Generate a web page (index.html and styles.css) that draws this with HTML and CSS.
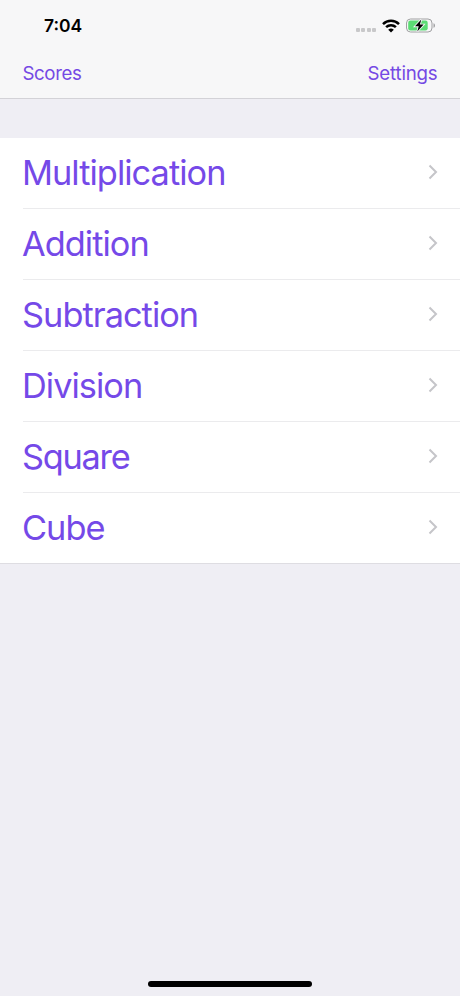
FILE: index.html
```html
<!DOCTYPE html>
<html lang="en">
<head>
<meta charset="utf-8">
<title>Math Practice</title>
<link rel="stylesheet" href="styles.css">
</head>
<body>
<header class="top">
  <div class="status">
    <span class="time">7:04</span>
    <div class="indicators">
      <div class="signal"><i></i><i></i><i></i><i></i></div>
      <svg class="wifi" width="18" height="14" viewBox="0 0 18 14"><g fill="none" stroke="#000" stroke-width="2.5"><path d="M1 5.100a11.500 11.500 0 0 1 16 0"/><path d="M4.100 8.200a7 7 0 0 1 9.800 0"/></g><path d="M9 13.600 6.200 10.800a4 4 0 0 1 5.600 0z"/></svg>
      <svg class="battery" width="30" height="15" viewBox="0 0 30 15"><rect x=".5" y="1" width="25.500" height="13" rx="4" fill="none" stroke="#a0a0a2"/><rect x="2.200" y="2.600" width="19.500" height="9.800" rx="2.200" fill="#5bdc74"/><path d="M27.500 5.200v4.600c2-.7 2-3.900 0-4.600z" fill="#a0a0a2"/><path d="M15.300 1.500 9 8.300h3.700L11.300 13.500l6.300-6.900h-3.700z" stroke="#f7f7f8" stroke-width="1.800" paint-order="stroke"/></svg>
    </div>
  </div>
  <nav class="nav"><a class="action">Scores</a><a class="action settings">Settings</a></nav>
</header>
<main class="list">
  <div class="row"><span class="label">Multiplication</span><svg class="chevron" width="10" height="16" viewBox="0 0 10 16"><path d="m1.500 1.500 6.500 6.500-6.500 6.500"/></svg></div>
  <div class="row"><span class="label">Addition</span><svg class="chevron" width="10" height="16" viewBox="0 0 10 16"><path d="m1.500 1.500 6.500 6.500-6.500 6.500"/></svg></div>
  <div class="row"><span class="label">Subtraction</span><svg class="chevron" width="10" height="16" viewBox="0 0 10 16"><path d="m1.500 1.500 6.500 6.500-6.500 6.500"/></svg></div>
  <div class="row"><span class="label">Division</span><svg class="chevron" width="10" height="16" viewBox="0 0 10 16"><path d="m1.500 1.500 6.500 6.500-6.500 6.500"/></svg></div>
  <div class="row"><span class="label tight">Square</span><svg class="chevron" width="10" height="16" viewBox="0 0 10 16"><path d="m1.500 1.500 6.500 6.500-6.500 6.500"/></svg></div>
  <div class="row"><span class="label">Cube</span><svg class="chevron" width="10" height="16" viewBox="0 0 10 16"><path d="m1.500 1.500 6.500 6.500-6.500 6.500"/></svg></div>
</main>
<div class="home"></div>
</body>
</html>
```
FILE: styles.css
```css
* { box-sizing: border-box; }
body { margin: 0; height: 996px; display: flex; flex-direction: column; background: #efeef4; font-family: Inter, sans-serif; overflow: hidden; }
.top { height: 99px; background: #f7f7f8; border-bottom: 1px solid #d3d2d7; }
.status { height: 50px; padding: 1px 24px 0 44px; display: flex; align-items: center; justify-content: space-between; }
.time { font-size: 17.5px; font-weight: 600; }
.indicators { display: flex; align-items: center; gap: 6px; }
.signal { display: flex; gap: 1.5px; margin-top: 9px; }
.signal i { width: 4px; height: 4px; border-radius: 1px; background: #c8c8ca; }
.nav { height: 48px; padding: 0 22.5px; display: flex; align-items: center; justify-content: space-between; }
.action { font-size: 18.7px; line-height: 22px; letter-spacing: -.4px; color: #7549e4; }
.settings { letter-spacing: -.2px; }
.list { margin-top: 39px; background: #fff; border-bottom: 1px solid #dedde2; }
.row { height: 71px; margin-left: 23px; padding-right: 22px; display: flex; align-items: center; justify-content: space-between; border-bottom: 1px solid #ebebed; }
.row:last-child { height: 70px; border-bottom: 0; }
.label { margin-left: -1px; font-size: 34.3px; line-height: 42px; letter-spacing: -.95px; color: #7549e8; white-space: nowrap; }
.tight { letter-spacing: -1.25px; }
.chevron { margin-bottom: 2px; fill: none; stroke: #c5c5c9; stroke-width: 2; }
.home { width: 164px; height: 6px; border-radius: 3px; background: #000; margin: auto auto 9px; }
```
